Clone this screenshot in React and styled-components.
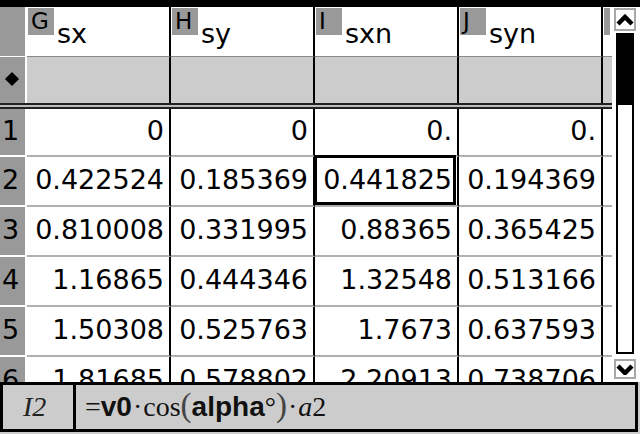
import React from 'react';
import styled, { createGlobalStyle } from 'styled-components';

const GlobalStyle = createGlobalStyle`
  * { box-sizing: border-box; }
  body { margin: 0; background: #fff; }
`;

const Screen = styled.div`
  width: 640px;
  height: 434px;
  display: flex;
  flex-direction: column;
  overflow: hidden;
  background: #fff;
  font-family: "DejaVu Sans", "Liberation Sans", sans-serif;
  color: #000;
`;

const TopBar = styled.div`
  height: 7px;
  flex-shrink: 0;
  background: #000;
`;

const Main = styled.div`
  display: flex;
  align-items: stretch;
  height: 375px;
  flex-shrink: 0;
  overflow: hidden;
`;

const Sheet = styled.div`
  width: 612px;
  flex-shrink: 0;
  display: flex;
  flex-direction: column;
  overflow: hidden;
`;

const Row = styled.div`
  display: grid;
  grid-template-columns: 27px 144px 144px 144px 144px 9px;
  height: ${({ $h }) => $h}px;
  flex-shrink: 0;
`;

const RowHead = styled.div`
  background: #999;
  border-right: 2px solid #fff;
  border-bottom: ${({ $line }) => $line}px solid #fff;
  display: flex;
  align-items: center;
  padding: 0 0 4px 2px;
  font-size: 27px;
`;

const Diamond = styled.span`
  width: 10px;
  height: 10px;
  margin: 2px 0 0 5px;
  background: #000;
  transform: rotate(45deg);
`;

const Cell = styled.div`
  position: relative;
  min-width: 0;
  background: ${({ $bg }) => $bg || '#fff'};
  border-right: 2px solid #000;
  border-bottom: ${({ $line }) => $line}px solid ${({ $lineColor }) => $lineColor || '#b0b0b0'};
  display: flex;
  align-items: center;
  justify-content: flex-end;
  padding: 0 5px 4px 0;
  font-size: 27px;
  white-space: nowrap;

  &:last-child {
    border-right: none;
    padding: 0;
  }

  ${({ $selected }) =>
    $selected &&
    `
    &::after {
      content: '';
      position: absolute;
      top: -2px;
      left: -1px;
      right: 1px;
      bottom: 0;
      border: 3px solid #000;
    }
  `}
`;

const HeadCell = styled(Cell)`
  justify-content: flex-start;
  align-items: flex-start;
  padding: 11px 0 0 30px;

  &:last-child {
    padding: 0;
  }
`;

const ColLetter = styled.span`
  position: absolute;
  top: 1px;
  left: 1px;
  width: ${({ $w }) => $w || 26}px;
  height: 27px;
  background: #999;
  font-size: 23px;
  line-height: 27px;
  padding-left: 3px;
  overflow: hidden;
`;

const Divider = styled.div`
  height: 6px;
  flex-shrink: 0;
  border-top: 2px solid #222;
  border-bottom: 2px solid #222;
  background: #bdbdbd;
`;

const ScrollCol = styled.div`
  width: 28px;
  flex-shrink: 0;
  padding: 1px 2px 3px 0;
  display: flex;
  flex-direction: column;
  align-items: center;
  background: #fff;
`;

const ScrollBtn = styled.div`
  width: 22px;
  height: ${({ $h }) => $h}px;
  flex: 0 0 ${({ $h }) => $h}px;
  border: 2px solid #a8a8a8;
  background: #fff;
  display: flex;
  align-items: center;
  justify-content: center;
`;

const Track = styled.div`
  width: 18px;
  flex: 1 1 auto;
  min-height: 0;
  margin: 2px 0 5px;
  border: 2px solid #000;
  display: flex;
  flex-direction: column;
`;

const Thumb = styled.div`
  height: 70px;
  flex-shrink: 0;
  background: #000;
`;

const FormulaBar = styled.div`
  height: 52px;
  flex-shrink: 0;
  background: #ccc;
  padding: 0 2px 2px 0;
`;

const FormulaBox = styled.div`
  height: 100%;
  border: 3px solid #000;
  display: flex;
  align-items: center;
`;

const CellRef = styled.div`
  width: 73px;
  height: 100%;
  border-right: 3px solid #000;
  display: flex;
  align-items: center;
  padding-left: 20px;
  font: italic 28px "Liberation Serif", serif;
  color: #222;
`;

const Formula = styled.div`
  display: flex;
  align-items: baseline;
  padding: 0 0 2px 9px;
  font: 28px "Liberation Serif", serif;
  color: #111;
  white-space: pre;
`;

const Bold = styled.span`
  font: bold 28px "Liberation Sans", sans-serif;
`;

const Ital = styled.span`
  font-style: italic;
`;

const Paren = styled.span`
  font-size: 33px;
  line-height: 1;
  color: #444;
`;

const Dot = styled.span`
  margin: 0 1px;
`;

const Chevron = ({ down }) => (
  <svg width="18" height="12" viewBox="0 0 18 12">
    <polyline
      points={down ? '2,3 9,10 16,3' : '2,10 9,3 16,10'}
      fill="none"
      stroke="#000"
      strokeWidth="4.5"
      strokeLinejoin="miter"
    />
  </svg>
);

const columns = [
  { letter: 'G', name: 'sx' },
  { letter: 'H', name: 'sy' },
  { letter: 'I', name: 'sxn' },
  { letter: 'J', name: 'syn' },
];

const data = [
  ['0', '0', '0.', '0.'],
  ['0.422524', '0.185369', '0.441825', '0.194369'],
  ['0.810008', '0.331995', '0.88365', '0.365425'],
  ['1.16865', '0.444346', '1.32548', '0.513166'],
  ['1.50308', '0.525763', '1.7673', '0.637593'],
  ['1.81685', '0.578802', '2.20913', '0.738706'],
];

export default function App() {
  return (
    <Screen>
      <GlobalStyle />
      <TopBar />
      <Main>
        <Sheet>
          <Row $h={50}>
            <RowHead $line={1} />
            {columns.map((c) => (
              <HeadCell key={c.letter} $line={1} $lineColor="#888">
                <ColLetter>{c.letter}</ColLetter>
                {c.name}
              </HeadCell>
            ))}
            <HeadCell $line={1} $lineColor="#888">
              <ColLetter $w={6} />
            </HeadCell>
          </Row>
          <Row $h={46}>
            <RowHead $line={0}>
              <Diamond />
            </RowHead>
            {columns.map((c) => (
              <Cell key={c.letter} $line={0} $bg="#ccc" />
            ))}
            <Cell $line={0} $bg="#ccc" />
          </Row>
          <Divider />
          {data.map((row, i) => (
            <Row key={i} $h={i === 0 ? 48 : 50}>
              <RowHead $line={2}>{i + 1}</RowHead>
              {row.map((v, j) => (
                <Cell key={j} $line={2} $selected={i === 1 && j === 2}>
                  {v}
                </Cell>
              ))}
              <Cell $line={2} />
            </Row>
          ))}
        </Sheet>
        <ScrollCol>
          <ScrollBtn $h={23}>
            <Chevron />
          </ScrollBtn>
          <Track>
            <Thumb />
          </Track>
          <ScrollBtn $h={20}>
            <Chevron down />
          </ScrollBtn>
        </ScrollCol>
      </Main>
      <FormulaBar>
        <FormulaBox>
          <CellRef>I2</CellRef>
          <Formula>
            =<Bold>v0</Bold>
            <Dot>·</Dot>cos<Paren>(</Paren>
            <Bold>alpha</Bold>°<Paren>)</Paren>
            <Dot>·</Dot>
            <Ital>a</Ital>2
          </Formula>
        </FormulaBox>
      </FormulaBar>
    </Screen>
  );
}
